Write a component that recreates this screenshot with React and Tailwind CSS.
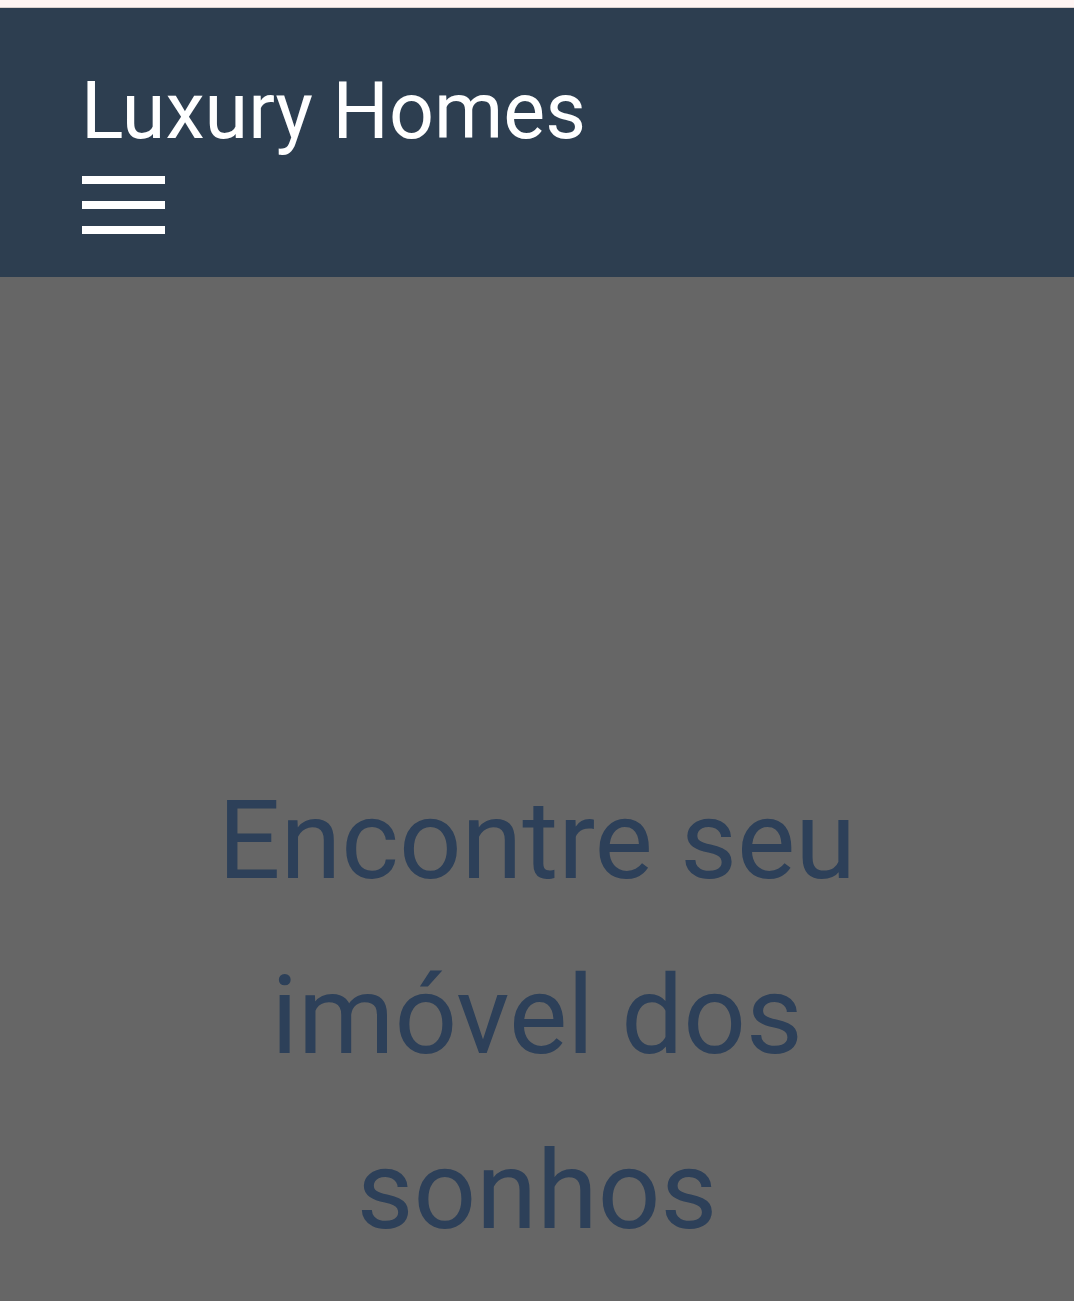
import React from 'react';

const App = () => {
  return (
    <div className="min-h-screen bg-[#666666]" style={{ fontFamily: 'Roboto, "Noto Sans", sans-serif' }}>
      <div className="h-[8px] bg-[#fff5f3] border-b border-[#d9cfcd]"></div>
      <header className="bg-[#2d3e50] pl-[81px] pt-[64px] pb-[43px]">
        <h1 className="text-white text-[79px] leading-none font-normal">Luxury Homes</h1>
        <button className="ml-[1px] mt-[25px] flex flex-col gap-[17px] w-[83px]" aria-label="Menu">
          <span className="block h-[8px] w-full bg-white"></span>
          <span className="block h-[8px] w-full bg-white"></span>
          <span className="block h-[8px] w-full bg-white"></span>
        </button>
      </header>
      <section className="pt-[476px] px-[80px] text-center">
        <h2 className="text-[#2d4059] text-[110px] leading-[175px] font-normal">
          Encontre seu imóvel dos sonhos
        </h2>
      </section>
    </div>
  );
};

export default App;
